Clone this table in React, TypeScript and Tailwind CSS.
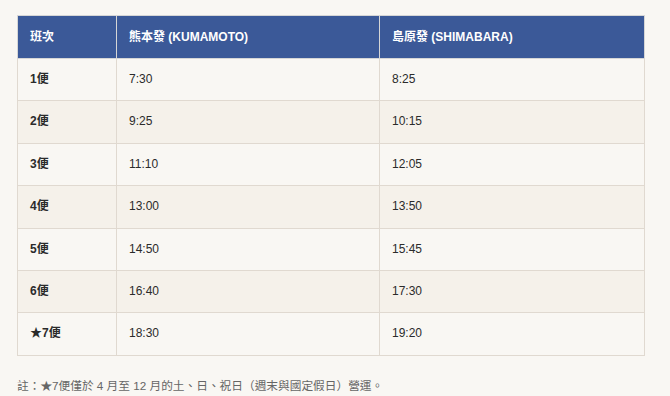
import React from "react";

const rows = [
  { no: "1便", from: "7:30", to: "8:25" },
  { no: "2便", from: "9:25", to: "10:15" },
  { no: "3便", from: "11:10", to: "12:05" },
  { no: "4便", from: "13:00", to: "13:50" },
  { no: "5便", from: "14:50", to: "15:45" },
  { no: "6便", from: "16:40", to: "17:30" },
  { no: "★7便", from: "18:30", to: "19:20" },
];

const App = () => {
  return (
    <div className="min-h-[396px] bg-[#f9f7f3] px-[17px] pt-[15px] text-[#2b2b2b] font-['Liberation_Sans','Noto_Sans_CJK_TC',sans-serif]">
      <table className="w-[628px] border-collapse border border-[#dcdcdc] text-[12px] table-fixed">
        <thead>
          <tr className="bg-[#3b5998] text-white">
            <th className="w-[99px] border border-[#d6d6d6] px-3 py-3 text-left font-bold leading-[18px]">班次</th>
            <th className="w-[263px] border border-[#d6d6d6] px-3 py-3 text-left font-bold leading-[18px]">熊本發 (KUMAMOTO)</th>
            <th className="border border-[#d6d6d6] px-3 py-3 text-left font-bold leading-[18px]">島原發 (SHIMABARA)</th>
          </tr>
        </thead>
        <tbody>
          {rows.map((row, idx) => (
            <tr key={row.no} className={idx % 2 === 1 ? "bg-[#f5f1ea]" : "bg-[#f9f7f3]"}>
              <td className="border border-[#e0d9d0] px-3 py-3 font-bold leading-[17.4px]">{row.no}</td>
              <td className="border border-[#e0d9d0] px-3 py-3 leading-[17.4px]">{row.from}</td>
              <td className="border border-[#e0d9d0] px-3 py-3 leading-[17.4px]">{row.to}</td>
            </tr>
          ))}
        </tbody>
      </table>
      <p className="mt-[21px] text-[11.7px] leading-[18px] text-[#666]">
        註：★7便僅於 4 月至 12 月的土、日、祝日（週末與國定假日）營運。
      </p>
    </div>
  );
};

export default App;
